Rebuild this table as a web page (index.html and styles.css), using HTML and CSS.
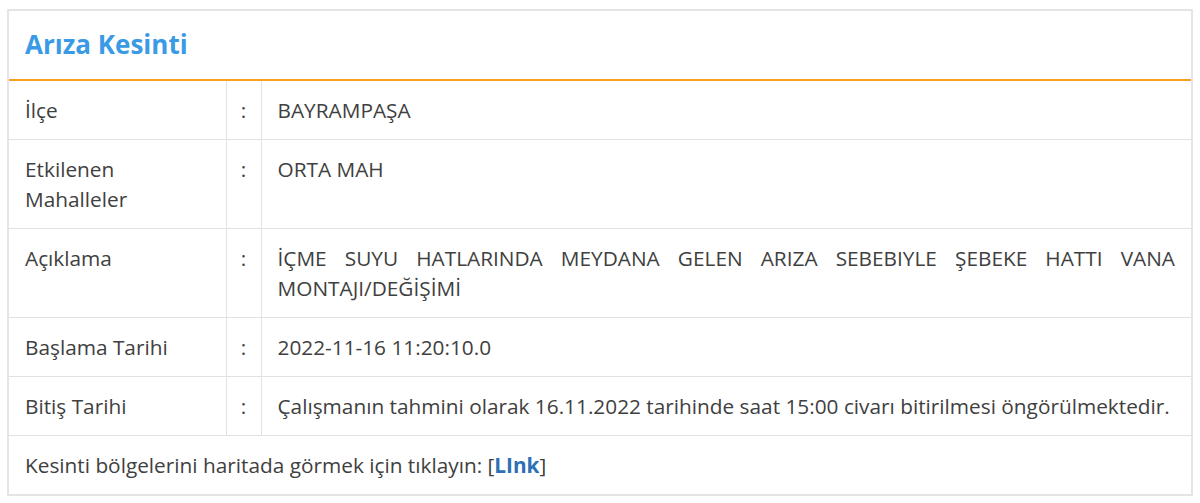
FILE: index.html
```html
<!DOCTYPE html>
<html lang="tr">
<head>
<meta charset="utf-8">
<title>Arıza Kesinti</title>
<link rel="stylesheet" href="styles.css">
</head>
<body>
<div class="panel">
  <div class="panel-head"><h2 class="panel-title">Arıza Kesinti</h2></div>
  <table class="info">
    <colgroup>
      <col class="c-label">
      <col class="c-sep">
      <col>
    </colgroup>
    <tr>
      <td class="label">İlçe</td>
      <td class="sep">:</td>
      <td class="value">BAYRAMPAŞA</td>
    </tr>
    <tr>
      <td class="label">Etkilenen<br>Mahalleler</td>
      <td class="sep">:</td>
      <td class="value">ORTA MAH</td>
    </tr>
    <tr>
      <td class="label">Açıklama</td>
      <td class="sep">:</td>
      <td class="value justify">İÇME SUYU HATLARINDA MEYDANA GELEN ARIZA SEBEBIYLE ŞEBEKE HATTI VANA MONTAJI/DEĞİŞİMİ</td>
    </tr>
    <tr>
      <td class="label">Başlama Tarihi</td>
      <td class="sep">:</td>
      <td class="value">2022-11-16 11:20:10.0</td>
    </tr>
    <tr>
      <td class="label">Bitiş Tarihi</td>
      <td class="sep">:</td>
      <td class="value">Çalışmanın tahmini olarak 16.11.2022 tarihinde saat 15:00 civarı bitirilmesi öngörülmektedir.</td>
    </tr>
    <tr>
      <td class="foot" colspan="3">Kesinti bölgelerini haritada görmek için tıklayın: [<a class="link" href="#">LInk</a>]</td>
    </tr>
  </table>
</div>
</body>
</html>
```
FILE: styles.css
```css
html, body {
  margin: 0;
  padding: 0;
  background: #ffffff;
}
body {
  padding: 9px 7px 0 7px;
  font-family: "Open Sans", "Liberation Sans", sans-serif;
  color: #404040;
}
.panel {
  width: 1186px;
  border: 2px solid #e4e4e4;
  box-sizing: border-box;
  background: #fff;
}
.panel-head {
  height: 68px;
  display: flex;
  align-items: center;
  padding: 0 16px 3px 16px;
  box-sizing: border-box;
  height: 70px;
  border-bottom: 2px solid #f6a21e;
}
.panel-title {
  margin: 0;
  font-size: 26px;
  font-weight: 700;
  color: #3a9ae6;
}
.info {
  width: 100%;
  border-collapse: collapse;
  table-layout: fixed;
  font-size: 20.8px;
  line-height: 30px;
}
.c-label {
  width: 217px;
}
.c-sep {
  width: 35px;
}
.info td {
  border-top: 1px solid #e2e2e2;
  vertical-align: top;
  padding: 14px 16px;
}
.info tr:first-child td {
  border-top: none;
}
.label {
  border-right: 1px solid #e2e2e2;
}
.info .sep {
  padding: 14px 0;
  text-align: center;
  border-right: 1px solid #e2e2e2;
}
.justify {
  text-align: justify;
}
.link {
  color: #2e6fb5;
  font-weight: 700;
  text-decoration: none;
}
```
